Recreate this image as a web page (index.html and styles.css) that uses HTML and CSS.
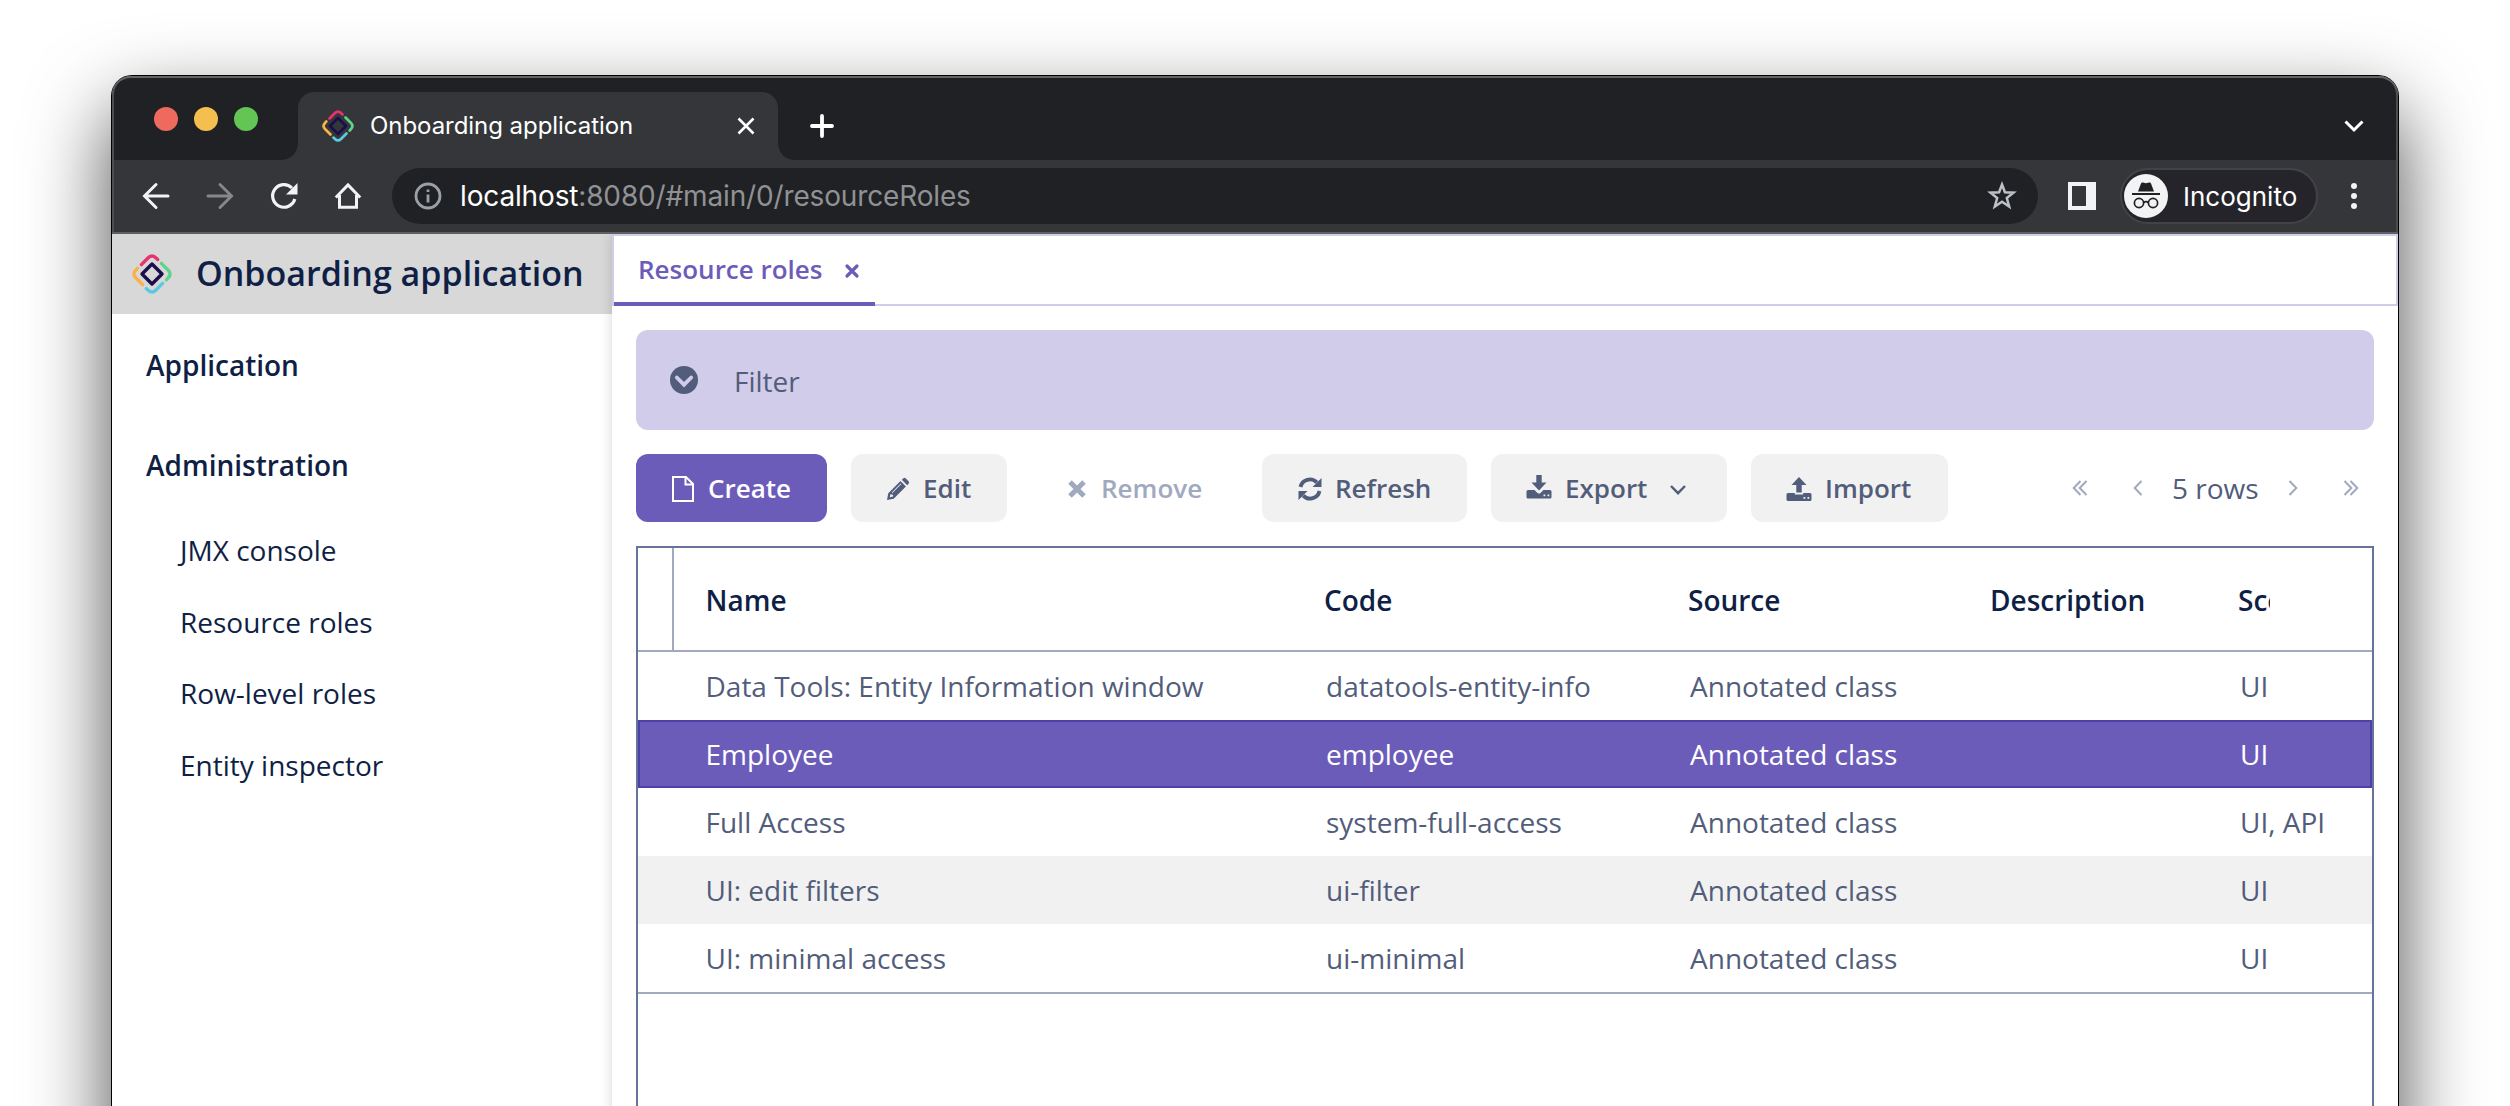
FILE: index.html
```html
<!DOCTYPE html>
<html lang="en">
<head>
<meta charset="utf-8">
<title>Onboarding application</title>
<link rel="stylesheet" href="styles.css">
</head>
<body>
<svg width="0" height="0" class="defs">
  <symbol id="logo" viewBox="-16 -16 32 32">
    <g fill="none" stroke-width="2.7" stroke-linecap="round">
      <path stroke="#e8336d" d="M-8.5-7.5L-3-13Q0-16 3-13L4.6-11.6"/>
      <path stroke="#5fd38d" transform="rotate(90)" d="M-8.5-7.5L-3-13Q0-16 3-13L4.6-11.6"/>
      <path stroke="#5bc9e2" transform="rotate(180)" d="M-8.5-7.5L-3-13Q0-16 3-13L4.6-11.6"/>
      <path stroke="#f8b246" transform="rotate(270)" d="M-8.5-7.5L-3-13Q0-16 3-13L4.6-11.6"/>
      <path stroke="#180f4b" stroke-linejoin="round" d="M0-8L8 0L0 8L-8 0Z"/>
    </g>
  </symbol>
</svg>
<div class="window">
  <header class="tabstrip">
    <div class="lights"><i class="red"></i><i class="amber"></i><i class="green"></i></div>
    <div class="tab">
      <svg class="favicon" width="32" height="32"><use href="#logo"/></svg>
      <span class="tab-title">Onboarding application</span>
      <svg width="20" height="20" viewBox="0 0 20 20" fill="none" stroke="#fff" stroke-width="2.6"><path d="M2.500 2.500L17.500 17.500M17.500 2.500L2.500 17.500"/></svg>
    </div>
    <svg class="plus" width="26" height="26" viewBox="0 0 26 26" fill="none" stroke="#fff" stroke-width="3.800" stroke-linecap="round"><path d="M13 3V23M3 13H23"/></svg>
    <svg class="tab-search" width="22" height="14" viewBox="0 0 22 14" fill="none" stroke="#fff" stroke-width="3"><path d="M2.500 2.500L11 11L19.500 2.500"/></svg>
  </header>
  <div class="toolbar">
    <svg width="32" height="32" viewBox="0 0 32 32" fill="none" stroke="#f1f3f4" stroke-width="3" stroke-linecap="round"><path d="M28 16H5M16 4.500L4.500 16L16 27.500"/></svg>
    <svg width="32" height="32" viewBox="0 0 32 32" fill="none" stroke="#86878a" stroke-width="3" stroke-linecap="round"><path d="M4 16H27M16 4.500L27.500 16L16 27.500"/></svg>
    <svg width="32" height="32" viewBox="0 0 32 32" fill="none" stroke="#f1f3f4" stroke-width="3.200"><path d="M26.800 19A11.300 11.300 0 1 1 24 8"/><path d="M29.500 3V14.500H18Z" fill="#f1f3f4" stroke="none"/></svg>
    <svg width="32" height="32" viewBox="0 0 32 32" fill="none" stroke="#f1f3f4" stroke-width="3"><path d="M3.800 17.500L16 5L28.200 17.500M7.500 15V27.300H24.500V15"/></svg>
    <div class="omnibox">
      <svg width="28" height="28" viewBox="0 0 28 28" fill="none" stroke="#9aa0a6" stroke-width="2.800"><circle cx="14" cy="14" r="12"/><path d="M14 12.500V20.500M14 7.500V10"/></svg>
      <span class="url"><b>localhost</b>:8080/#main/0/resourceRoles</span>
      <svg width="32" height="32" viewBox="0 0 32 32" fill="none" stroke="#bdc1c6" stroke-width="2.500"><path d="M16 4.500L18.900 12.300L27.500 12.700L20.800 18L23.200 26.500L16 21.700L8.800 26.500L11.200 18L4.500 12.700L13.100 12.300Z"/></svg>
    </div>
    <svg class="panel" width="28" height="28"><path fill="#f1f3f4" fill-rule="evenodd" d="M0 0H28V28H0ZM4 4V24H18V4Z"/></svg>
    <div class="incognito">
      <svg width="44" height="44" viewBox="0 0 44 44"><circle cx="22" cy="22" r="22" fill="#f1f3f4"/><path fill="#202124" d="M14 17.500L17 9.500Q17.500 8 19 8.500L22 9.300L25 8.500Q26.500 8 27 9.500L30 17.500ZM8 19H36V21H8Z"/><g fill="none" stroke="#202124" stroke-width="1.700"><circle cx="15" cy="29" r="4.600"/><circle cx="29" cy="29" r="4.600"/><path d="M19.500 28.500Q22 26.800 24.500 28.500"/></g></svg>
      <span>Incognito</span>
    </div>
    <svg class="dots" width="8" height="28" fill="#f1f3f4"><circle cx="4" cy="4" r="3"/><circle cx="4" cy="14" r="3"/><circle cx="4" cy="24" r="3"/></svg>
  </div>
  <div class="app">
    <aside class="sidebar">
      <div class="brand"><svg width="40" height="40"><use href="#logo"/></svg><span>Onboarding application</span></div>
      <nav>
        <a class="group">Application</a>
        <a class="group">Administration</a>
        <a class="item">JMX console</a>
        <a class="item">Resource roles</a>
        <a class="item">Row-level roles</a>
        <a class="item">Entity inspector</a>
      </nav>
    </aside>
    <main>
      <div class="sheet-tabs">
        <div class="sheet-tab"><span>Resource roles</span><svg width="16" height="16" viewBox="0 0 16 16" fill="none" stroke="#6c5cb9" stroke-width="3.200" stroke-linecap="round"><path d="M3 3L13 13M13 3L3 13"/></svg></div>
      </div>
      <div class="content">
        <section class="filter">
          <svg width="28" height="28" viewBox="0 0 28 28"><circle cx="14" cy="14" r="14" fill="#525d7b"/><path d="M6.800 11.500L14 18.700L21.200 11.500" fill="none" stroke="#d1cce9" stroke-width="3.800" stroke-linecap="round"/></svg>
          <span>Filter</span>
        </section>
        <div class="actions">
          <button class="btn create"><svg width="24" height="28" viewBox="0 0 24 28" fill="none" stroke="#fff" stroke-width="2"><path d="M2 2H15L22 9V26H2ZM14.500 2V9.500H22"/></svg>Create</button>
          <button class="btn edit"><svg width="24" height="24" viewBox="0 0 24 24" fill="#525d7b"><path d="M1 23L2.300 16.300L14.500 4.100L19.900 9.500L7.700 21.700ZM15.800 2.800L17.200 1.400Q18.500 .3 19.800 1.400L22.600 4.200Q23.700 5.500 22.600 6.800L21.200 8.200Z"/><path d="M4.500 17L3.800 20.200L7 19.500V17.800H5.800ZM5.800 15.500L14.700 6.500L15.300 7.100L6.400 16Z" fill="#f1f1f1"/></svg>Edit</button>
          <button class="btn remove"><svg width="20" height="20" viewBox="0 0 20 20" fill="none" stroke="#a1a9bf" stroke-width="5"><path d="M3 3L17 17M17 3L3 17"/></svg>Remove</button>
          <button class="btn refresh"><svg width="24" height="24" viewBox="0 0 24 24"><path d="M2.500 10A9.600 9.600 0 0 1 18.800 5.400M21.500 14A9.600 9.600 0 0 1 5.200 18.600" fill="none" stroke="#525d7b" stroke-width="3.800"/><path d="M23.500 1V10H14.500ZM.5 23V14H9.500Z" fill="#525d7b"/></svg>Refresh</button>
          <button class="btn export"><svg width="26" height="24" viewBox="0 0 26 24" fill="#525d7b"><path d="M10.300 0H15.700V7.500H20.500L13 15.500L5.500 7.500H10.300Z"/><path fill-rule="evenodd" d="M2 15H8.500L11.500 18Q13 19.200 14.500 18L17.500 15H24Q25.500 15 25.500 16.500V22Q25.500 23.500 24 23.500H2Q.5 23.500 .5 22V16.500Q.5 15 2 15ZM17.500 19.500V21.300H19.300V19.500ZM21.500 19.500V21.300H23.300V19.500Z"/></svg>Export<svg class="caret" width="18" height="12" viewBox="0 0 18 12" fill="none" stroke="#525d7b" stroke-width="2.400"><path d="M2 2L9 9.200L16 2"/></svg></button>
          <button class="btn import"><svg width="26" height="24" viewBox="0 0 26 24" fill="#525d7b"><path d="M13 0L20.500 8H15.700V15.500H10.300V8H5.500Z"/><path fill-rule="evenodd" d="M2 16H8.800V17.500H17.200V16H24Q25.500 16 25.500 17.500V22.500Q25.500 24 24 24H2Q.5 24 .5 22.500V17.500Q.5 16 2 16ZM17.500 20V21.800H19.300V20ZM21.500 20V21.800H23.300V20Z"/></svg>Import</button>
          <div class="pager">
            <svg width="16" height="16" viewBox="0 0 16 16"><path d="M8.500 1L1.700 8L8.500 15M14.500 1L7.700 8L14.500 15"/></svg>
            <svg class="prev" width="10" height="16" viewBox="0 0 10 16"><path d="M8.500 1L1.700 8L8.500 15"/></svg>
            <span>5 rows</span>
            <svg class="next" width="10" height="16" viewBox="0 0 10 16"><path d="M1.500 1L8.300 8L1.500 15"/></svg>
            <svg width="16" height="16" viewBox="0 0 16 16"><path d="M1.500 1L8.300 8L1.500 15M7.500 1L14.300 8L7.500 15"/></svg>
          </div>
        </div>
        <div class="table">
          <div class="row head"><i class="gutter"></i><span>Name</span><span>Code</span><span>Source</span><span>Description</span><span class="clip">Scope</span></div>
          <div class="row"><i></i><span>Data Tools: Entity Information window</span><span>datatools-entity-info</span><span>Annotated class</span><span></span><span>UI</span></div>
          <div class="row selected"><i></i><span>Employee</span><span>employee</span><span>Annotated class</span><span></span><span>UI</span></div>
          <div class="row"><i></i><span>Full Access</span><span>system-full-access</span><span>Annotated class</span><span></span><span>UI, API</span></div>
          <div class="row stripe"><i></i><span>UI: edit filters</span><span>ui-filter</span><span>Annotated class</span><span></span><span>UI</span></div>
          <div class="row last"><i></i><span>UI: minimal access</span><span>ui-minimal</span><span>Annotated class</span><span></span><span>UI</span></div>
        </div>
      </div>
    </main>
  </div>
</div>
</body>
</html>
```
FILE: styles.css
```css
* { box-sizing: border-box; }
html, body { margin: 0; height: 1106px; overflow: hidden; background: #fff; }
body { font-family: "Open Sans", "Noto Sans", sans-serif; font-size: 28px; color: #525d7b; }
svg { display: block; flex: none; }
.defs { position: absolute; }

.window {
  width: 2286px;
  height: 1400px;
  margin: 76px 0 0 112px;
  border-radius: 20px 20px 0 0;
  box-shadow: 0 0 0 1px #000, 0 35px 82px rgba(0, 0, 0, .72);
}

/* browser chrome */
.tabstrip {
  display: flex;
  height: 84px;
  padding: 14px 33px 0 42px;
  border-radius: 19px 19px 0 0;
  background: #202124;
  box-shadow: inset 0 2px 0 #636466, inset 2px 0 0 #4c4d4f, inset -2px 0 0 #4c4d4f;
  font-family: Inter, "Liberation Sans", sans-serif;
}
.lights { display: flex; gap: 16px; width: 144px; padding-top: 17px; }
.lights i { width: 24px; height: 24px; border-radius: 50%; }
.red { background: #ee6a5f; }
.amber { background: #f5bf4f; }
.green { background: #62c554; }
.tab {
  position: relative;
  display: flex;
  align-items: center;
  width: 480px;
  height: 68px;
  margin-top: 2px;
  padding: 0 22px 0 24px;
  border-radius: 16px 16px 0 0;
  background: #35363a;
}
.tab::before, .tab::after { content: ""; position: absolute; bottom: 0; width: 16px; height: 16px; }
.tab::before { left: -16px; background: radial-gradient(circle at 0 0, transparent 15.5px, #35363a 16px); }
.tab::after { right: -16px; background: radial-gradient(circle at 100% 0, transparent 15.5px, #35363a 16px); }
.tab-title { flex: 1; margin-left: 16px; padding-bottom: 1px; color: #fff; font-size: 24px; letter-spacing: -.05px; white-space: nowrap; }
.plus { margin: 23px 0 0 31px; }
.tab-search { margin: 29px 0 0 auto; }
.toolbar {
  display: flex;
  align-items: center;
  height: 74px;
  padding: 0 40px 2px 28px;
  background: #35363a;
  box-shadow: inset 0 -2px 0 #5f6063, inset 2px 0 0 #4c4d4f, inset -2px 0 0 #4c4d4f;
  color: #fff;
  font-family: Inter, "Liberation Sans", sans-serif;
}
.toolbar > svg { margin-right: 32px; }
.omnibox { display: flex; align-items: center; width: 1646px; height: 56px; margin-left: -4px; padding: 0 20px 0 22px; border-radius: 28px; background: #202124; }
.url { flex: 1; margin-left: 18px; color: #909194; letter-spacing: -.15px; white-space: nowrap; }
.url b { color: #fff; font-weight: 400; }
.toolbar > .panel { margin: 0 24px 0 30px; }
.incognito { display: flex; align-items: center; width: 198px; height: 56px; padding-left: 2px; border: 2px solid #434347; border-radius: 28px; background: #25242a; font-size: 26px; }
.incognito span { margin-left: 15px; padding-top: 1px; }
.toolbar > .dots { margin: 0 0 0 32px; }

/* application */
.app { display: flex; height: 1200px; background: #fff; }
.sidebar { width: 500px; color: #0f1f45; }
.brand { display: flex; align-items: center; height: 80px; padding-left: 20px; background: #d8d8d8; font-size: 34px; font-weight: 600; white-space: nowrap; }
.brand span { margin-left: 24px; padding-bottom: 2px; }
nav { display: flex; flex-direction: column; padding: 1px 0 0 34px; }
.group { line-height: 100px; font-weight: 600; }
.item { padding-left: 34px; line-height: 71.7px; }
main { flex: 1; min-width: 0; background: #fff; box-shadow: 0 0 12px rgba(0, 0, 0, .16); clip-path: inset(0 0 0 -20px); }
.sheet-tabs { display: flex; height: 72px; border: 2px solid #d1cce9; }
.sheet-tab { display: flex; align-items: center; width: 261px; height: 70px; padding: 0 15px 0 24px; border-bottom: 4px solid #6c5cb9; color: #6c5cb9; font-size: 26px; font-weight: 600; white-space: nowrap; }
.sheet-tab svg { margin: 4px 0 0 auto; }
.content { padding: 24px; }
.filter { display: flex; align-items: center; height: 100px; padding-left: 34px; border-radius: 12px; background: #d1cce9; }
.filter svg { margin-bottom: 1px; }
.filter span { margin-left: 36px; padding-top: 2px; }
.actions { display: flex; gap: 24px; height: 68px; margin: 24px 0; }
.btn { display: flex; align-items: center; height: 68px; padding: 0 0 0 35px; border: 0; border-radius: 12px; background: #f1f1f1; color: #525d7b; font: 600 26px "Open Sans", "Noto Sans", sans-serif; white-space: nowrap; }
.btn svg { margin: 2px 13px 0 0; }
.create { width: 191px; background: #6c5cb9; color: #fff; }
.edit { width: 156px; }
.remove { width: 207px; padding-left: 36px; background: none; color: #a1a9bf; }
.remove svg { margin-right: 14px; }
.refresh { width: 205px; padding-left: 36px; }
.export { width: 236px; }
.export svg { margin-top: -2px; }
.btn .caret { margin: 4px 0 0 22px; }
.import { width: 197px; }
.pager { display: flex; align-items: center; flex: 1; padding-left: 100px; white-space: nowrap; }
.pager path { fill: none; stroke: #a1a9bf; stroke-width: 2; }
.prev { margin: 0 29px 0 45px; }
.next { margin: 0 45px 0 29px; }
.table { height: 700px; border: 2px solid #66739a; }
.row { display: grid; grid-template-columns: 36px 651px 364px 302px 249px 1fr; align-items: center; height: 68px; white-space: nowrap; }
.row > i { height: 100%; }
.row span:nth-child(2) { padding-left: 31.5px; }
.row span:nth-child(3), .row span:nth-child(4) { padding-left: 1px; }
.head { height: 104px; grid-template-columns: 36px 649px 364px 303px 248px 1fr; border-bottom: 2px solid #a1a9bf; color: #0f1f45; font-weight: 600; }
.head span { padding-top: 2px; }
.gutter { border-right: 2px solid #a1a9bf; }
.clip { width: 32px; overflow: hidden; }
.selected { background: #6c5cb9; box-shadow: inset 0 0 0 2px #4f40a5; color: #fff; }
.stripe { background: #f1f1f1; }
.last { height: 70px; border-bottom: 2px solid #a1a9bf; }
```
